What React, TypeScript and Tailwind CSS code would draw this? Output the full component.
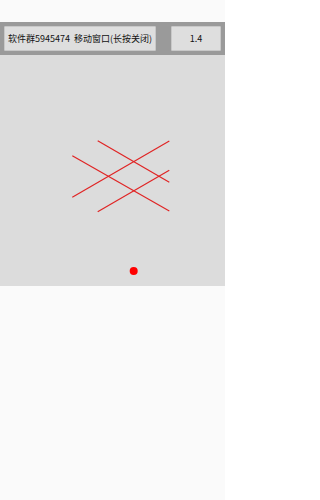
export default function App() {
  return (
    <div className="flex h-[500px] w-[225px] flex-col bg-[#fafafa] font-['Noto_Sans_CJK_SC',sans-serif]">
      <div className="h-[22px] bg-[#fafafa]" />
      <div className="flex h-[264px] flex-col bg-[#dcdcdc]">
        <div className="flex h-[33px] items-center justify-between bg-[#9a9a9a] px-[4px]">
          <button className="flex h-[25px] w-[152px] items-center justify-center rounded-[1px] border border-[#c8c8c8] bg-[#dedede] text-[9px] leading-none text-[#111]">
            软件群5945474&nbsp;&nbsp;移动窗口(长按关闭)
          </button>
          <button className="flex h-[25px] w-[50px] items-center justify-center rounded-[1px] border border-[#c8c8c8] bg-[#dedede] text-[9px] leading-none text-[#111]">
            1.4
          </button>
        </div>
        <svg width="225" height="231" viewBox="0 55 225 231" className="block">
          <g stroke="#e02424" strokeWidth="1.2">
            <line x1="97.7" y1="140.7" x2="169.3" y2="182.3" />
            <line x1="72.3" y1="155.7" x2="169.3" y2="211" />
            <line x1="72.3" y1="197.3" x2="169.3" y2="141" />
            <line x1="97.7" y1="211.7" x2="169.3" y2="170.3" />
          </g>
          <circle cx="133.7" cy="271" r="4" fill="#ff0000" />
        </svg>
      </div>
    </div>
  );
}
